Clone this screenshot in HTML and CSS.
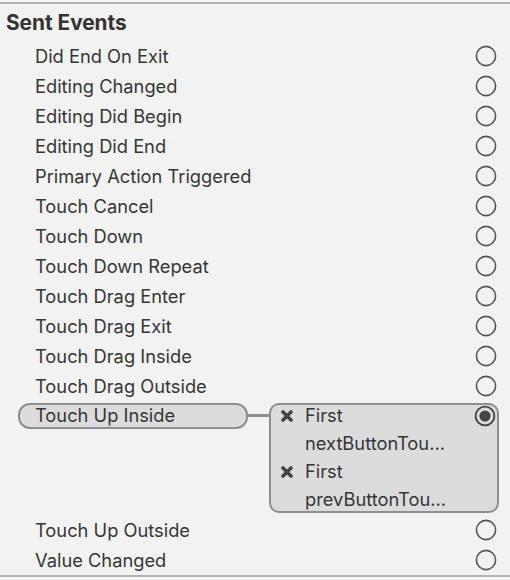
FILE: index.html
```html
<!DOCTYPE html>
<html>
<head>
<meta charset="utf-8">
<link rel="stylesheet" href="styles.css">
</head>
<body>
<div class="panel">
  <div class="title">Sent Events</div>
  <div class="row"><span>Did End On Exit</span><svg class="radio" viewBox="0 0 22 22"><circle cx="11" cy="11" r="9.6"/></svg></div>
  <div class="row"><span>Editing Changed</span><svg class="radio" viewBox="0 0 22 22"><circle cx="11" cy="11" r="9.6"/></svg></div>
  <div class="row"><span>Editing Did Begin</span><svg class="radio" viewBox="0 0 22 22"><circle cx="11" cy="11" r="9.6"/></svg></div>
  <div class="row"><span>Editing Did End</span><svg class="radio" viewBox="0 0 22 22"><circle cx="11" cy="11" r="9.6"/></svg></div>
  <div class="row"><span>Primary Action Triggered</span><svg class="radio" viewBox="0 0 22 22"><circle cx="11" cy="11" r="9.6"/></svg></div>
  <div class="row"><span>Touch Cancel</span><svg class="radio" viewBox="0 0 22 22"><circle cx="11" cy="11" r="9.6"/></svg></div>
  <div class="row"><span>Touch Down</span><svg class="radio" viewBox="0 0 22 22"><circle cx="11" cy="11" r="9.6"/></svg></div>
  <div class="row"><span>Touch Down Repeat</span><svg class="radio" viewBox="0 0 22 22"><circle cx="11" cy="11" r="9.6"/></svg></div>
  <div class="row"><span>Touch Drag Enter</span><svg class="radio" viewBox="0 0 22 22"><circle cx="11" cy="11" r="9.6"/></svg></div>
  <div class="row"><span>Touch Drag Exit</span><svg class="radio" viewBox="0 0 22 22"><circle cx="11" cy="11" r="9.6"/></svg></div>
  <div class="row"><span>Touch Drag Inside</span><svg class="radio" viewBox="0 0 22 22"><circle cx="11" cy="11" r="9.6"/></svg></div>
  <div class="row"><span>Touch Drag Outside</span><svg class="radio" viewBox="0 0 22 22"><circle cx="11" cy="11" r="9.6"/></svg></div>
  <div class="group">
    <div class="pill">Touch Up Inside</div>
    <div class="link"></div>
    <div class="box">
      <svg class="x" viewBox="0 0 12 12"><path d="M2 2L10 10M10 2L2 10"/></svg>
      <span class="t">First</span>
      <svg class="radio on" viewBox="0 0 22 22"><circle cx="11" cy="11" r="9.4"/><circle class="dot" cx="11" cy="11" r="5.6"/></svg>
      <span class="blank"></span>
      <span class="t">nextButtonTou…</span>
      <span></span>
      <svg class="x" viewBox="0 0 12 12"><path d="M2 2L10 10M10 2L2 10"/></svg>
      <span class="t">First</span>
      <span></span>
      <span class="blank"></span>
      <span class="t">prevButtonTou…</span>
      <span></span>
    </div>
  </div>
  <div class="row"><span>Touch Up Outside</span><svg class="radio" viewBox="0 0 22 22"><circle cx="11" cy="11" r="9.6"/></svg></div>
  <div class="row"><span>Value Changed</span><svg class="radio" viewBox="0 0 22 22"><circle cx="11" cy="11" r="9.6"/></svg></div>
</div>
</body>
</html>
```
FILE: styles.css
```css
html, body {
  margin: 0;
  padding: 0;
}
body {
  background: #f6f6f6;
  width: 510px;
  height: 580px;
  overflow: hidden;
  font-family: Inter, "Liberation Sans", sans-serif;
  color: #363636;
}
.panel {
  margin-top: 2px;
  background: #f2f2f2;
  border-top: 2px solid #b2b2b2;
  border-bottom: 2px solid #b2b2b2;
}
.title {
  height: 37px;
  display: flex;
  align-items: center;
  padding-left: 6px;
  font-weight: 700;
  font-size: 20.8px;
  color: #333;
}
.row {
  height: 30px;
  display: flex;
  align-items: center;
  justify-content: space-between;
  padding-left: 35px;
  padding-right: 13px;
  font-size: 18.3px;
}
.row span {
  margin-top: -1px;
}
.radio {
  width: 22px;
  height: 22px;
  display: block;
}
.radio circle {
  fill: none;
  stroke: #555;
  stroke-width: 1.6;
}
.radio.on circle {
  stroke: #444;
  stroke-width: 1.9;
}
.radio.on .dot {
  fill: #444;
  stroke: none;
}
.group {
  height: 114px;
  display: flex;
  align-items: flex-start;
  font-size: 18.3px;
}
.pill {
  margin-top: 2px;
  margin-left: 18px;
  width: 230px;
  height: 26px;
  box-sizing: border-box;
  border: 2px solid #8e8e8e;
  border-radius: 12px;
  background: #dcdcdc;
  padding-left: 15px;
  line-height: 21px;
}
.link {
  margin-top: 13px;
  width: 21px;
  height: 3px;
  background: #8e8e8e;
}
.box {
  margin-top: 2px;
  width: 230px;
  height: 110px;
  box-sizing: border-box;
  border: 2px solid #8e8e8e;
  border-radius: 10px;
  background: #dcdcdc;
  padding-left: 10px;
  padding-right: 0;
  display: grid;
  grid-template-columns: 24px 1fr 23px;
  grid-template-rows: 28px 28px 28px 22px;
  line-height: 21px;
  align-items: start;
}
.box .x {
  width: 12px;
  height: 12px;
  margin-top: 5px;
}
.box .x path {
  stroke: #444;
  stroke-width: 3.6;
  stroke-linecap: round;
  fill: none;
}
.box .radio {
  margin-top: 0;
}
.t {
  white-space: nowrap;
}
```
